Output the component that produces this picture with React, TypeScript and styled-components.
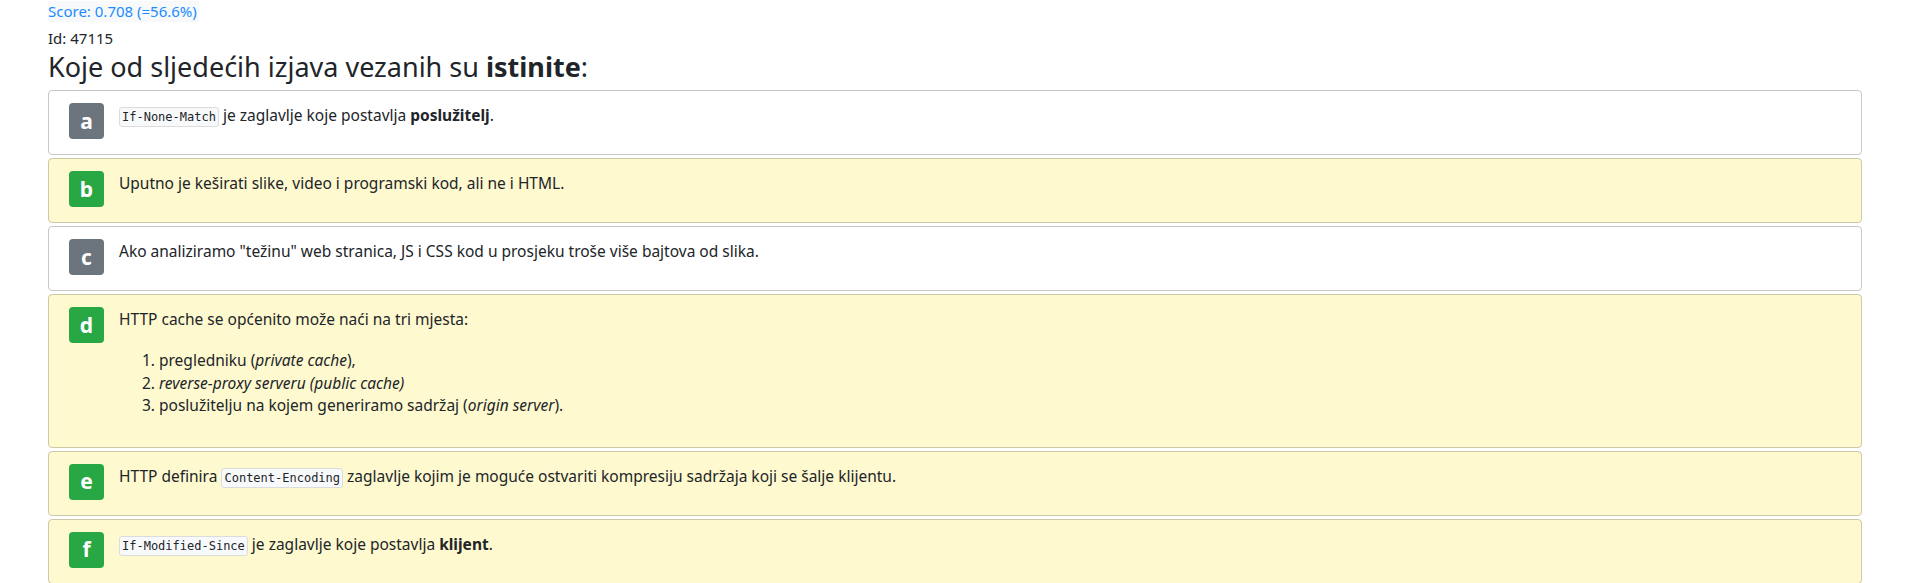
import React from "react";
import styled, { createGlobalStyle } from "styled-components";

const GlobalStyle = createGlobalStyle`
  body {
    margin: 0;
    background: #fff;
    color: #212529;
    font-family: "Noto Sans", "Open Sans", sans-serif;
    font-size: 15.5px;
    line-height: 1.5;
  }
`;

const Page = styled.div`
  padding: 0 48px;
`;

const Score = styled.div`
  display: inline-block;
  background: #f8f9fa;
  color: #1a8cff;
  font-size: 15px;
  line-height: 21px;
  padding-right: 2px;
`;

const Id = styled.div`
  margin-top: 4px;
  font-size: 15px;
  line-height: 22px;
`;

const Title = styled.h3`
  margin: 2px 0 7px;
  font-size: 27px;
  font-weight: 400;
  line-height: 32px;
`;

const Card = styled.div<{ $correct: boolean }>`
  display: flex;
  align-items: flex-start;
  gap: 15px;
  padding: 12px 20px;
  margin-bottom: 3px;
  border: 1px solid ${(p) => (p.$correct ? "#cdc9a6" : "#c8c8c8")};
  border-radius: 4px;
  background: ${(p) => (p.$correct ? "#fff9cf" : "#fff")};
`;

const Badge = styled.div<{ $correct: boolean }>`
  flex: none;
  display: flex;
  align-items: center;
  justify-content: center;
  width: 35px;
  height: 36px;
  margin-bottom: 3px;
  border-radius: 4px;
  background: ${(p) => (p.$correct ? "#28a745" : "#6c757d")};
  color: #fff;
  font-size: 21px;
  font-weight: 700;
`;

const Body = styled.div`
  flex: 1;
  p {
    margin: 0 0 18px;
    line-height: 24px;
  }
  p:last-child {
    margin-bottom: 0;
  }
  ol {
    margin: 0 0 18px;
    padding-left: 40px;
    line-height: 22.5px;
  }
`;

const Code = styled.code`
  font-family: "DejaVu Sans Mono", "Liberation Mono", monospace;
  font-size: 12px;
  background: #f8f9fa;
  border: 1px solid #dcdcdc;
  border-radius: 3px;
  padding: 2px 2px;
`;

type Answer = {
  letter: string;
  correct: boolean;
  content: React.ReactNode;
};

const answers: Answer[] = [
  {
    letter: "a",
    correct: false,
    content: (
      <p>
        <Code>If-None-Match</Code> je zaglavlje koje postavlja <b>poslužitelj</b>.
      </p>
    ),
  },
  {
    letter: "b",
    correct: true,
    content: <p>Uputno je keširati slike, video i programski kod, ali ne i HTML.</p>,
  },
  {
    letter: "c",
    correct: false,
    content: (
      <p>
        Ako analiziramo "težinu" web stranica, JS i CSS kod u prosjeku troše više bajtova od slika.
      </p>
    ),
  },
  {
    letter: "d",
    correct: true,
    content: (
      <>
        <p>HTTP cache se općenito može naći na tri mjesta:</p>
        <ol>
          <li>
            pregledniku (<i>private cache</i>),
          </li>
          <li>
            <i>reverse-proxy serveru (public cache)</i>
          </li>
          <li>
            poslužitelju na kojem generiramo sadržaj (<i>origin server</i>).
          </li>
        </ol>
      </>
    ),
  },
  {
    letter: "e",
    correct: true,
    content: (
      <p>
        HTTP definira <Code>Content-Encoding</Code> zaglavlje kojim je moguće ostvariti kompresiju
        sadržaja koji se šalje klijentu.
      </p>
    ),
  },
  {
    letter: "f",
    correct: true,
    content: (
      <p>
        <Code>If-Modified-Since</Code> je zaglavlje koje postavlja <b>klijent</b>.
      </p>
    ),
  },
];

const App: React.FC = () => {
  return (
    <Page>
      <GlobalStyle />
      <Score>Score: 0.708 (=56.6%)</Score>
      <Id>Id: 47115</Id>
      <Title>
        Koje od sljedećih izjava vezanih su <b>istinite</b>:
      </Title>
      {answers.map((a) => (
        <Card key={a.letter} $correct={a.correct}>
          <Badge $correct={a.correct}>{a.letter}</Badge>
          <Body>{a.content}</Body>
        </Card>
      ))}
    </Page>
  );
};

export default App;
